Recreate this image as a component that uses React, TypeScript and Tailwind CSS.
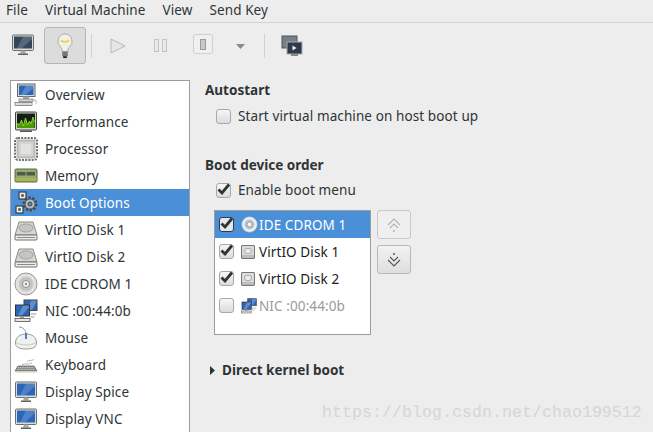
import type { ReactNode } from 'react'

function Svg({ size = 24, children }: { size?: number; children: ReactNode }) {
  return (
    <svg width={size} height={size} viewBox="0 0 24 24" className="shrink-0 block">
      {children}
    </svg>
  )
}

function Monitor({ size = 24, screen = '#2a66b8' }: { size?: number; screen?: string }) {
  return (
    <Svg size={size}>
      <rect x="1.5" y="2" width="21" height="15.5" rx="1" fill="#d9dbd8" stroke="#6b6e6a" />
      <rect x="3" y="3.500" width="18" height="12" fill={screen} />
      <path d="M6 15.500 L12 3.500 H21 V6 L11 15.500Z" fill="#fff" opacity="0.18" />
      <path d="M10 17.500h4l1 3H9z" fill="#a5a7a3" />
      <rect x="7" y="20.500" width="10" height="1.500" fill="#5e615d" />
    </Svg>
  )
}

function OverviewIcon() {
  return (
    <Svg>
      <rect x="3.500" y="1" width="17.500" height="12.500" fill="#d9dbd8" stroke="#666" />
      <rect x="5" y="2.500" width="14.500" height="9.500" fill="#2a66b8" />
      <path d="M7 12 L12 2.500 H19.500 V5 L11 12Z" fill="#fff" opacity="0.22" />
      <rect x="9" y="13.500" width="6" height="2.500" fill="#a5a7a3" />
      <rect x="5" y="16" width="14" height="2.500" fill="#d4d6d2" stroke="#777" strokeWidth="0.7" />
      <rect x="1" y="19.500" width="17" height="3" fill="#eeeeec" stroke="#666" strokeWidth="0.7" />
      <path d="M3 21h13" stroke="#999" strokeWidth="0.8" strokeDasharray="1 0.600" />
      <path d="M20 17c3 0 3 3 1.500 4" fill="none" stroke="#aaa" />
    </Svg>
  )
}

function PerformanceIcon() {
  return (
    <Svg>
      <rect x="1.500" y="2" width="21" height="18" rx="1" fill="#cfd1cc" stroke="#444" />
      <rect x="3" y="3.500" width="18" height="14.500" fill="#14200f" />
      <path d="M3 14h3l1.500-4 2 6 2-8 2 7 2-4 1.500 3 2-7 1.500 5V18H3Z" fill="#4e9a06" />
      <path d="M3 14h3l1.500-4 2 6 2-8 2 7 2-4 1.500 3 2-7 1.500 5" fill="none" stroke="#8ae234" strokeWidth="0.9" />
      <rect x="6" y="20.500" width="12" height="1.500" fill="#555" />
    </Svg>
  )
}

function ProcessorIcon() {
  return (
    <Svg>
      <rect x="1" y="1" width="22" height="22" rx="3" fill="none" stroke="#6e6e6a" strokeWidth="2" strokeDasharray="2 1.200" />
      <rect x="2.500" y="2.500" width="19" height="19" rx="1.500" fill="#b9b9b5" />
      <rect x="4.500" y="4.500" width="15" height="15" rx="1" fill="#d4d4d1" />
      <rect x="7" y="7" width="10" height="10" fill="#e2e2df" />
    </Svg>
  )
}

function MemoryIcon() {
  return (
    <Svg>
      <rect x="1" y="5" width="22" height="13" rx="1" fill="#8fae6c" stroke="#5b6b46" />
      <rect x="3" y="8" width="8.500" height="3.500" fill="#55574e" />
      <rect x="12.500" y="8" width="8.500" height="3.500" fill="#55574e" />
      <path d="M1.500 15.500h21" stroke="#d3b53a" strokeWidth="2.500" strokeDasharray="1 0.800" />
    </Svg>
  )
}

function GearsIcon() {
  return (
    <Svg>
      <rect x="5" y="1" width="7" height="7" fill="#eeeeec" stroke="#3b3f3d" strokeWidth="1.200" />
      <rect x="7.200" y="3.200" width="2.600" height="2.600" fill="#555" />
      <rect x="2" y="15" width="7" height="7" fill="#eeeeec" stroke="#3b3f3d" strokeWidth="1.200" />
      <rect x="4.200" y="17.200" width="2.600" height="2.600" fill="#555" />
      <circle cx="16" cy="13" r="6" fill="none" stroke="#454545" strokeWidth="3" strokeDasharray="2.200 1.500" />
      <circle cx="16" cy="13" r="5" fill="#b9bbb7" stroke="#555" />
      <circle cx="16" cy="13" r="2" fill="#4a90d9" stroke="#444" />
    </Svg>
  )
}

function DiskIcon() {
  return (
    <Svg>
      <path d="M5 4h14l4 13H1Z" fill="#d6d6d3" stroke="#8a8a86" />
      <ellipse cx="12" cy="10" rx="7" ry="4" fill="#c5c5c2" stroke="#a3a3a0" />
      <rect x="1" y="17" width="22" height="5" rx="1" fill="#eeeeec" stroke="#6e6e6a" />
      <rect x="3" y="19" width="18" height="1" fill="#8a8a86" />
    </Svg>
  )
}

function CdIcon({ size = 24 }: { size?: number }) {
  return (
    <Svg size={size}>
      <circle cx="12" cy="12" r="11" fill="#e2e2df" stroke="#9a9a96" />
      <circle cx="12" cy="12" r="7" fill="#c2c2bf" stroke="#c9c9c6" />
      <circle cx="12" cy="12" r="3.500" fill="#f3f3f1" stroke="#8f8f8b" />
      <circle cx="12" cy="12" r="1.200" fill="#8f8f8b" />
    </Svg>
  )
}

function NetworkIcon({ size = 24 }: { size?: number }) {
  return (
    <Svg size={size}>
      <rect x="10" y="1" width="13" height="10.500" fill="#2a66b8" stroke="#444" />
      <path d="M14 11 L17 1.500 H22.500 V3 L18 11Z" fill="#fff" opacity="0.25" />
      <rect x="1.500" y="6" width="14" height="11" fill="#2a66b8" stroke="#333" />
      <path d="M4 16.500 L9 6.500 H15 V8 L8 16.500Z" fill="#fff" opacity="0.25" />
      <rect x="6" y="17" width="4" height="2" fill="#999" />
      <rect x="1" y="19.500" width="15" height="3" fill="#e6e6e3" stroke="#555" strokeWidth="0.8" />
      <path d="M16.500 15h6M16.500 18h4" stroke="#999" />
    </Svg>
  )
}

function MouseIcon() {
  return (
    <Svg>
      <path d="M1.500 17c0-6 4.500-9 10.500-9s10.500 3 10.500 9c0 4-3 6-10.500 6S1.500 21 1.500 17Z" fill="#f0f0ee" stroke="#9a9a96" />
      <path d="M2.500 17c5 2.500 14 2.500 19 0" fill="none" stroke="#c9c9c6" />
      <path d="M5 1c3 0 6 2 7 6" fill="none" stroke="#8a8a86" />
      <path d="M12 7v6" stroke="#3d7fd0" strokeWidth="2" />
    </Svg>
  )
}

function KeyboardIcon() {
  return (
    <Svg>
      <path d="M13 9c0-2 6-1 7-3M8 11.500c3-1 7 0 10-1.500" fill="none" stroke="#b4b4b1" />
      <path d="M4 13h16l3 5H1Z" fill="#8d8d89" stroke="#6c6c68" strokeWidth="0.8" />
      <path d="M4 14.500h16M3 16.500h18" stroke="#d8d8d5" strokeWidth="0.8" strokeDasharray="1 0.800" />
      <rect x="1" y="18" width="22" height="1.500" fill="#cfcfcc" />
    </Svg>
  )
}

function Check({ checked, blue }: { checked?: boolean; blue?: boolean }) {
  return (
    <span
      className={`relative block w-[15px] h-[15px] shrink-0 rounded-[3px] border ${
        blue ? 'border-[#2e3b4b] bg-[#e4e8ed]' : 'border-[#a8a8a8] bg-gradient-to-b from-[#f6f6f6] to-[#dcdcdc]'
      }`}
    >
      {checked && (
        <svg width="15" height="15" viewBox="0 0 15 15" className="absolute -left-px -top-[2px] overflow-visible">
          <path d="M2.500 7.500 L6 11 L13 2.500" fill="none" stroke="#2e3436" strokeWidth="2.800" />
        </svg>
      )}
    </span>
  )
}

function SmallDisk() {
  return (
    <span className="relative block w-[14px] h-[14px] shrink-0 border border-[#777] bg-[#dadad8] rounded-[1px]">
      <span className="absolute left-[2px] top-[2px] w-2 h-[6px] rounded-full border border-[#aaa] bg-[#eee]" />
      <span className="absolute left-0 right-0 bottom-0 h-[3px] bg-[#bcbcba]" />
    </span>
  )
}

function BootCd() {
  return (
    <svg width="17" height="17" viewBox="0 0 24 24" className="block">
      <circle cx="12" cy="12" r="11" fill="#eef0f2" stroke="#9fb0c4" />
      <circle cx="12" cy="12" r="7" fill="#b9c3cf" />
      <circle cx="12" cy="12" r="3.500" fill="#f7f7f5" stroke="#7f8a96" />
    </svg>
  )
}

const devices: [string, ReactNode][] = [
  ['Overview', <OverviewIcon />],
  ['Performance', <PerformanceIcon />],
  ['Processor', <ProcessorIcon />],
  ['Memory', <MemoryIcon />],
  ['Boot Options', <GearsIcon />],
  ['VirtIO Disk 1', <DiskIcon />],
  ['VirtIO Disk 2', <DiskIcon />],
  ['IDE CDROM 1', <CdIcon />],
  ['NIC :00:44:0b', <NetworkIcon />],
  ['Mouse', <MouseIcon />],
  ['Keyboard', <KeyboardIcon />],
  ['Display Spice', <Monitor />],
  ['Display VNC', <Monitor />],
]

const bootRows = [
  { label: 'IDE CDROM 1', on: true, selected: true, icon: <BootCd /> },
  { label: 'VirtIO Disk 1', on: true, icon: <SmallDisk /> },
  { label: 'VirtIO Disk 2', on: true, icon: <SmallDisk /> },
  { label: 'NIC :00:44:0b', on: false, muted: true, icon: <NetworkIcon size={16} /> },
]

export default function App() {
  return (
    <div className="font-['Noto_Sans',sans-serif] relative w-[653px] h-[432px] overflow-hidden bg-[#ededed] text-[13.5px] text-[#2e3436] tracking-[0.1px]">
      {/* menu bar */}
      <div className="flex h-[23px] items-start gap-[17px] pl-[6px] pt-[1px] border-b border-[#d3d3d3] leading-[18px]">
        <span>File</span>
        <span>Virtual Machine</span>
        <span>View</span>
        <span>Send Key</span>
      </div>

      {/* toolbar */}
      <div className="flex h-[57px] items-start">
        <div className="ml-[11px] mt-[10px]">
          <Monitor size={24} screen="#34465c" />
        </div>
        <div className="ml-[9px] mt-[4px] flex h-[37px] w-[42px] items-center justify-center rounded-[3px] border border-[#b5b5b5] bg-[#dcdcdc]">
          <svg width="20" height="26" viewBox="0 0 20 28">
            <path d="M10 1a8 8 0 0 0-5 14c1.500 1.500 2 3 2 5h6c0-2 .5-3.500 2-5a8 8 0 0 0-5-14Z" fill="#f0f0ea" stroke="#a8a8a2" />
            <path d="M5.500 8c2 2 7 2 9 0" fill="none" stroke="#f0d040" strokeWidth="2" />
            <rect x="7" y="20" width="6" height="5" fill="#777" />
            <rect x="8" y="25" width="4" height="2" fill="#222" />
          </svg>
        </div>
        <div className="ml-[5px] mt-[11px] h-[24px] w-px bg-[#d0d0d0]" />
        <div className="ml-[18px] mt-[15px]">
          <svg width="16" height="16" viewBox="0 0 16 16">
            <path d="M1 1 L15 8 L1 15Z" fill="#e6e6e6" stroke="#b8b8b8" />
          </svg>
        </div>
        <div className="ml-[28px] mt-[16px] flex gap-[3px]">
          <span className="block h-[13px] w-[5px] border border-[#c4c4c4] bg-[#e8e8e8]" />
          <span className="block h-[13px] w-[5px] border border-[#c4c4c4] bg-[#e8e8e8]" />
        </div>
        <div className="ml-[26px] mt-[11px] flex h-[20px] w-[20px] items-center justify-center rounded-[3px] border border-[#cfcfcf] bg-[#f0f0f0]">
          <span className="block h-[11px] w-[6px] border border-[#9a9a9a] bg-[#c8c8c8]" />
        </div>
        <div className="ml-[23px] mt-[21px]">
          <svg width="9" height="5" viewBox="0 0 9 5" className="block">
            <path d="M0 0H9L4.500 5Z" fill="#8a8a8a" />
          </svg>
        </div>
        <div className="ml-[19px] mt-[11px] h-[24px] w-px bg-[#d0d0d0]" />
        <div className="ml-[16px] mt-[12px]">
          <svg width="22" height="22" viewBox="0 0 22 22">
            <rect x="1" y="1" width="15" height="12" fill="#75808c" stroke="#555" />
            <rect x="6" y="7" width="15" height="12" fill="#2c3a4a" stroke="#aaa" />
            <path d="M11.500 10.500v5l4-2.500Z" fill="#eee" />
            <rect x="10" y="19" width="7" height="2" fill="#888" />
          </svg>
        </div>
      </div>

      <div className="flex">
        {/* device list */}
        <div className="ml-[10px] w-[180px] h-[360px] shrink-0 overflow-hidden border border-[#9d9d9d] border-b-0 bg-white">
          {devices.map(([label, icon]) => {
            const active = label === 'Boot Options'
            return (
              <div
                key={label}
                className={`flex h-[27px] items-center gap-[7px] pl-[3px] ${active ? 'bg-[#4a90d9] text-white' : 'text-[#2e3436]'}`}
              >
                {icon}
                <span className="pt-[2px]">{label}</span>
              </div>
            )
          })}
        </div>

        {/* details */}
        <div className="ml-[15px] flex-1 pt-[1px]">
          <div className="font-bold tracking-normal leading-[18px]">Autostart</div>
          <div className="ml-[11px] mt-[8px] flex h-[18px] items-center gap-[7px]">
            <Check />
            <span>Start virtual machine on host boot up</span>
          </div>
          <div className="mt-[31px] font-bold tracking-normal leading-[18px]">Boot device order</div>
          <div className="ml-[11px] mt-[7px] flex h-[18px] items-center gap-[7px]">
            <Check checked />
            <span>Enable boot menu</span>
          </div>
          <div className="ml-[9px] mt-[11px] flex items-start gap-[6px]">
            <div className="h-[125px] w-[157px] border border-[#9d9d9d] bg-white">
              {bootRows.map((row) => (
                <div
                  key={row.label}
                  className={`flex h-[27px] items-center pl-[4px] ${
                    row.selected ? 'bg-[#4a90d9] text-white' : row.muted ? 'text-[#9a9a9a]' : 'text-[#1c1c1c]'
                  }`}
                >
                  <Check checked={row.on} blue={row.selected} />
                  <span className="ml-[7px] w-[17px] shrink-0">{row.icon}</span>
                  <span className="ml-[1px] pt-[2px]">{row.label}</span>
                </div>
              ))}
            </div>
            <div className="flex flex-col gap-[6px]">
              <button className="flex h-[29px] w-[34px] items-center justify-center rounded-[3px] border border-[#c8c8c8] bg-[#efefef]">
                <svg width="16" height="16" viewBox="0 0 16 16">
                  <path d="M2 8 L8 2 L14 8 M4 11 L8 7 L12 11" fill="none" stroke="#b4b4b4" strokeWidth="1.100" />
                  <circle cx="8" cy="14" r="1" fill="#b4b4b4" />
                </svg>
              </button>
              <button className="flex h-[29px] w-[34px] items-center justify-center rounded-[3px] border border-[#b8b8b8] bg-gradient-to-b from-[#f2f2f2] to-[#dedede]">
                <svg width="16" height="16" viewBox="0 0 16 16">
                  <path d="M2 8 L8 14 L14 8 M4 5 L8 9 L12 5" fill="none" stroke="#555" strokeWidth="1.100" />
                  <circle cx="8" cy="2" r="1" fill="#555" />
                </svg>
              </button>
            </div>
          </div>
          <div className="ml-[5px] mt-[26px] flex h-[18px] items-center gap-[7px] font-bold tracking-normal">
            <svg width="5" height="9" viewBox="0 0 5 9" className="shrink-0">
              <path d="M0 0 L5 4.500 L0 9Z" fill="#2e3436" />
            </svg>
            <span>Direct kernel boot</span>
          </div>
        </div>
      </div>

      {/* watermark */}
      <span className="absolute left-[322px] top-[403px] font-['Liberation_Mono',monospace] text-[16.67px] tracking-normal leading-[20px] text-[#d6d6d2]">
        https://blog.csdn.net/chao199512
      </span>
    </div>
  )
}
